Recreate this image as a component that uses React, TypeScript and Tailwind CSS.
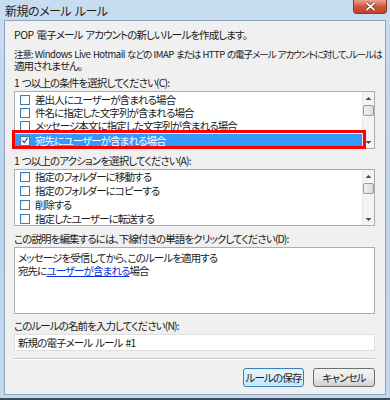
const font = "[font-family:'Noto_Sans_CJK_JP',sans-serif] [font-feature-settings:'palt']";
const lat = "tracking-[-0.5px]";

function Check({ checked = false }: { checked?: boolean }) {
  return (
    <span className="flex h-[10px] w-[10px] shrink-0 items-center justify-center border border-[#3d7bad] bg-gradient-to-br from-[#dfe9f3] via-white to-white">
      {checked && (
        <svg width="9" height="9" viewBox="0 0 9 9">
          <path d="M1.5 4.5 L3.6 6.8 L7.6 1.6" fill="none" stroke="#2a5a8a" strokeWidth="1.4" />
        </svg>
      )}
    </span>
  );
}

function Scroll() {
  return (
    <div className="flex w-[12px] shrink-0 flex-col items-center border-l border-[#e6e6e6] bg-[#f4f4f4]">
      <svg width="7" height="10" viewBox="0 0 7 10" className="mt-[2px]">
        <path d="M0.5 6 L3.5 3 L6.5 6 Z" fill="#4d4d4d" />
      </svg>
      <div className="mt-[1px] h-[11px] w-[11px] rounded-[2px] border border-[#9a9a9a] bg-gradient-to-r from-[#f2f2f2] to-[#dcdcdc]" />
      <div className="flex-1" />
      <svg width="7" height="10" viewBox="0 0 7 10" className="mb-[1px]">
        <path d="M0.5 4 L3.5 7 L6.5 4 Z" fill="#4d4d4d" />
      </svg>
    </div>
  );
}

function Row({ text, checked, selected }: { text: string; checked?: boolean; selected?: boolean }) {
  return (
    <div
      className={`flex h-[13px] items-center gap-[5px] pl-[5px] ${selected ? "bg-[#3399ff] text-white" : "text-[#1a1a1a]"}`}
    >
      <Check checked={checked} />
      <span className="leading-[12px]">{text}</span>
    </div>
  );
}

export default function App() {
  return (
    <div className={`${font} relative h-[400px] w-[390px] overflow-hidden bg-gradient-to-b from-[#c8dcf1] via-[#bcd3ec] to-[#c4d9ee] text-[10.5px] tracking-[-0.9px] [word-spacing:1.5px]`}>
      {/* title bar */}
      <div className="flex h-[20px] items-center justify-between pl-[5px] pr-[3px]">
        <span className="pt-[1px] text-[12px] leading-[14px] tracking-[-0.5px] text-[#1e1e1e]">新規のメール ルール</span>
        <div className="flex h-[14px] w-[34px] items-center justify-center self-start rounded-b-[4px] border border-t-0 border-[#8a3a2c] bg-gradient-to-b from-[#e8a38e] via-[#d2553a] to-[#c4412a]">
          <svg width="11" height="9" viewBox="0 0 11 9">
            <path d="M1.5 1 L9.5 8 M9.5 1 L1.5 8" stroke="#5a2418" strokeWidth="3" />
            <path d="M1.5 1 L9.5 8 M9.5 1 L1.5 8" stroke="#ffffff" strokeWidth="1.7" />
          </svg>
        </div>
      </div>

      {/* client area */}
      <div className="mx-[4px] flex h-[375px] flex-col border border-[#8ea3bd] bg-[#f0f0f0] pl-[9px] pr-[10px] text-[#1a1a1a]">
        <p className="mt-[7px] leading-[13px]">
          <span className={lat}>POP</span> 電子メール アカウントの新しいルールを作成します。
        </p>
        <p className="mt-[7px] leading-[12px]">
          <span className="block whitespace-nowrap text-[9.5px] tracking-[-1px] [word-spacing:1px]">
            注意: <span className={lat}>Windows Live Hotmail</span> などの <span className={lat}>IMAP</span> または{" "}
            <span className={lat}>HTTP</span> の電子メール アカウントに対して、ルールは
          </span>
          <span className="block">適用されません。</span>
        </p>

        <p className="mt-[4px] leading-[13px]">1 つ以上の条件を選択してください(C):</p>
        <div className="relative mt-[2px] flex h-[58px] border border-[#abadb3] bg-white">
          <div className="flex flex-1 flex-col pt-[1px]">
            <Row text="差出人にユーザーが含まれる場合" />
            <Row text="件名に指定した文字列が含まれる場合" />
            <Row text="メッセージ本文に指定した文字列が含まれる場合" />
            <div className="mt-[2px]">
              <Row text="宛先にユーザーが含まれる場合" checked selected />
            </div>
          </div>
          <Scroll />
          <div className="absolute left-[-3px] top-[38px] h-[19px] w-[354px] border-[3px] border-[#ff0000]" />
        </div>

        <p className="mt-[5px] leading-[13px]">1 つ以上のアクションを選択してください(A):</p>
        <div className="mt-[2px] flex h-[57px] border border-[#abadb3] bg-white">
          <div className="flex flex-1 flex-col gap-[1px] pt-[1px]">
            <Row text="指定のフォルダーに移動する" />
            <Row text="指定のフォルダーにコピーする" />
            <Row text="削除する" />
            <Row text="指定したユーザーに転送する" />
          </div>
          <Scroll />
        </div>

        <p className="mt-[6px] leading-[13px]">この説明を編集するには、下線付きの単語をクリックしてください(D):</p>
        <div className="mt-[2px] h-[67px] border border-[#abadb3] bg-white px-[3px] pt-[3px] leading-[13px]">
          <p>メッセージを受信してから、このルールを適用する</p>
          <p>
            宛先に<span className="text-[#0b2fd8] underline">ユーザーが含まれる</span>場合
          </p>
        </div>

        <p className="mt-[5px] leading-[13px]">このルールの名前を入力してください(N):</p>
        <div className="mt-[2px] flex h-[17px] items-center border border-[#e0e0e0] bg-white px-[3px]">新規の電子メール ルール #1</div>

        <div className="mt-[7px] h-[2px] border-t border-b border-t-[#c8c8c8] border-b-white" />

        <div className="mt-[8px] flex justify-end gap-[9px]">
          <button className="h-[19px] w-[61px] whitespace-nowrap rounded-[3px] border border-[#3c7fb1] bg-gradient-to-b from-[#eaf6fd] to-[#bee6fd] text-[10.5px] leading-[13px] text-[#1a1a1a] shadow-[inset_0_0_0_1px_#d8f0fc]">
            ルールの保存
          </button>
          <button className="h-[19px] w-[62px] whitespace-nowrap rounded-[3px] border border-[#707070] bg-gradient-to-b from-[#f2f2f2] via-[#ebebeb] to-[#cfcfcf] text-[10.5px] leading-[13px] text-[#1a1a1a]">
            キャンセル
          </button>
        </div>
      </div>
      <div className="absolute bottom-0 left-0 h-[2px] w-full bg-[#3b4a5c]" />
    </div>
  );
}
